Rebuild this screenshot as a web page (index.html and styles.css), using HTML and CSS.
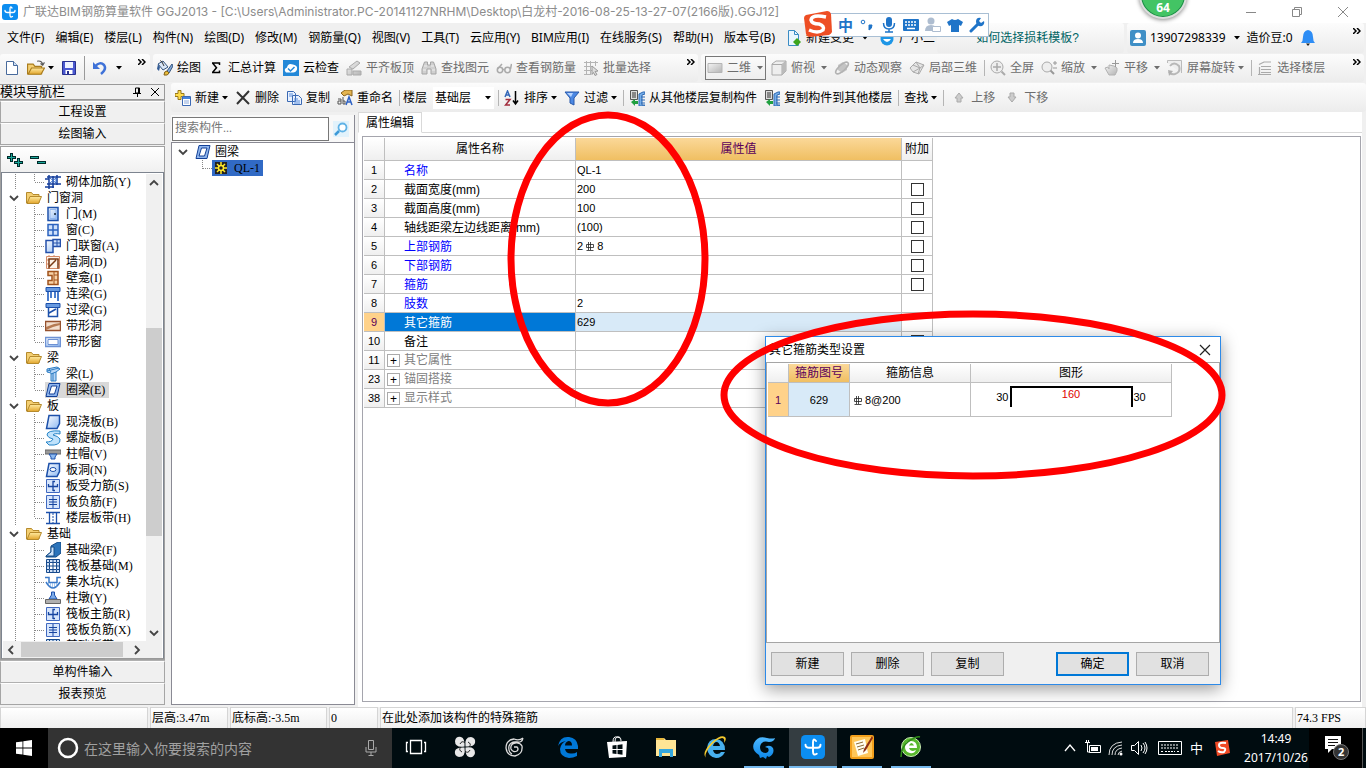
FILE: index.html
```html
<!DOCTYPE html>
<html lang="zh-CN">
<head>
<meta charset="utf-8">
<title>广联达BIM钢筋算量软件 GGJ2013</title>
<link rel="stylesheet" href="styles.css">
</head>
<body>
<svg class="defs" aria-hidden="true">
  <defs>
    <linearGradient id="gb" x1="0" y1="0" x2="1" y2="1"><stop offset="0" stop-color="#fff"/><stop offset="1" stop-color="#8db8f2"/></linearGradient>
    <linearGradient id="gf" x1="0" y1="0" x2="0" y2="1"><stop offset="0" stop-color="#ffeaa0"/><stop offset="1" stop-color="#e2a52c"/></linearGradient>
    <linearGradient id="gg" x1="0" y1="0" x2="1" y2="1"><stop offset="0" stop-color="#f4f4f4"/><stop offset="1" stop-color="#b4b4b4"/></linearGradient>
    <linearGradient id="gc" x1="0" y1="0" x2="0" y2="1"><stop offset="0" stop-color="#4db8ff"/><stop offset="1" stop-color="#0a86e8"/></linearGradient>
  </defs>
  <symbol id="caret" viewBox="0 0 6 4"><path d="M0 0h6L3 3.500z" fill="currentColor"/></symbol>
  <symbol id="more" viewBox="0 0 8 6"><path d="M0 0l3 3-3 3M4 0l3 3-3 3" fill="none" stroke="#000" stroke-width="1.500"/></symbol>
  <symbol id="app" viewBox="0 0 16 16"><rect width="16" height="16" rx="3" fill="#0c8df0"/><path d="M10 4Q8 1.500 8 5v6q0 3 2.500 1.500M3 6.500q0 2 2.500 2H11q2 0 2-2" fill="none" stroke="#fff" stroke-width="1.300" stroke-linecap="round"/></symbol>
  <symbol id="file" viewBox="0 0 16 16"><path d="M2.500 1.500h7l4 4v9h-11z" fill="#fff" stroke="#486a9c"/><path d="M9.500 1.500v4h4" fill="#cfe0f5" stroke="#486a9c"/></symbol>
  <symbol id="folder" viewBox="0 0 16 16"><path d="M.5 13V2.500h5l1.500 2h6V13z" fill="#f4cf72" stroke="#b58a2c"/><path d="M1 13.500L4 6.500h11.500l-3 7z" fill="url(#gf)" stroke="#b58a2c"/></symbol>
  <symbol id="open" viewBox="0 0 16 16"><path d="M.5 13V4.500h5l1.500 2h6V13z" fill="#f4cf72" stroke="#a97c1c"/><path d="M1 13.500L4 8h11.500l-3 5.500z" fill="url(#gf)" stroke="#a97c1c"/><path d="M9 2q4-1 5 3m-2-1l2 1.500L15.500 3" fill="none" stroke="#555"/></symbol>
  <symbol id="save" viewBox="0 0 16 16"><path d="M1.500 1.500h13v13h-13z" fill="#4a58d0" stroke="#28318f"/><path d="M4 2h8v6H4z" fill="#eef2ff"/><path d="M4.500 10h7v4h-7z" fill="#fff"/><path d="M6 11h2v3H6z" fill="#28318f"/></symbol>
  <symbol id="undo" viewBox="0 0 16 16"><path d="M3 6.500q5-5.500 9-1.500 3 4-3 9" fill="none" stroke="#3f72d8" stroke-width="2.500"/><path d="M1 2v7h7z" fill="#3f72d8"/></symbol>
  <symbol id="paint" viewBox="0 0 16 16"><path d="M1 4l5-3 5 6-5 3z" fill="#d9e6f5" stroke="#35557f"/><path d="M3 1q0-1 2 1l2 4" fill="none" stroke="#333"/><path d="M1 4l-1 5 2 2 1-4z" fill="#345d96"/><path d="M15 4l-5 7 2 2 4-7z" fill="#80a7d8" stroke="#35557f"/><path d="M10 11q-3 0-3 4 4 1 5-2z" fill="#e8bc3c" stroke="#82621b"/></symbol>
  <symbol id="sum" viewBox="0 0 16 16"><path d="M4 3h7.500v2M4.500 3l4 4.700-4 4.800M4 12.500h7.500v-2" fill="none" stroke="#000" stroke-width="1.500"/></symbol>
  <symbol id="cloud" viewBox="0 0 16 16"><rect width="16" height="16" fill="#2388d8"/><path d="M3 12.500q-3-3 1-5 1-5 6-3 5 1 4 5-1 3-4 3z" fill="#fff"/><path d="M5 8.500l2.500 2.500 4-4" fill="none" stroke="#2388d8" stroke-width="1.500"/></symbol>
  <symbol id="slab" viewBox="0 0 16 16"><path d="M3 7l8-6 3 2-7 6zM1 9h5v6H1zM7 11h8v4H7z" fill="url(#gg)" stroke="#aaa"/></symbol>
  <symbol id="bino" viewBox="0 0 16 16"><path d="M3.500 2h3v3h3V2h3l2.500 7v5H10V9H6v5H1V9z" fill="#d0d0d0" stroke="#a5a5a5"/><path d="M3 6h3M10 6h3M2 10h3M11 10h3" stroke="#eee"/></symbol>
  <symbol id="glass" viewBox="0 0 16 16"><g fill="none" stroke="#aaa" stroke-width="1.500"><circle cx="4" cy="10" r="2.700"/><circle cx="11.500" cy="10" r="2.700"/><path d="M6.500 9.500h2M1.500 9L6 4M14.500 9l1-5"/></g></symbol>
  <symbol id="batch" viewBox="0 0 16 16"><path d="M1 2.500h14M1 6.500h8M1 10.500h8M1 14.500h7M3.500 1v14M7.500 1v14M12.500 1v5" stroke="#b4b4b4"/><path d="M9 6l6 5-3 .5 2 3-2 1-1.500-3-1.500 2z" fill="#ddd" stroke="#999"/></symbol>
  <symbol id="rect" viewBox="0 0 16 16"><path d="M1 3.500h14v9H1z" fill="url(#gg)" stroke="#b5b5b5"/></symbol>
  <symbol id="cube" viewBox="0 0 16 16"><path d="M1 4l4-3h10v10l-4 4H1z" fill="#eee" stroke="#aaa"/><path d="M1 4.500h10V15M11 4.500L15 1" fill="none" stroke="#aaa"/><path d="M11 4.500L15 1v10l-4 4z" fill="#bbb"/></symbol>
  <symbol id="orbit" viewBox="0 0 16 16"><path d="M4 5l5-3 4 3v5l-5 3-4-3z" fill="#c4c4c4"/><ellipse cx="8" cy="8" rx="8" ry="3" transform="rotate(-42 8 8)" fill="none" stroke="#b2b2b2" stroke-width="1.500"/></symbol>
  <symbol id="part" viewBox="0 0 16 16"><path d="M1 8l6-6 8 3-5 9-6-2z" fill="#e6e6e6" stroke="#aaa"/><path d="M4 5l7 3M7 2l4 6-2 6M15 5l-4 3-7 4" fill="none" stroke="#aaa"/></symbol>
  <symbol id="full" viewBox="0 0 16 16"><circle cx="7" cy="7" r="6" fill="#eee" stroke="#aaa"/><path d="M7 3v8M3 7h8" stroke="#aaa" stroke-width="1.500"/><path d="M11.500 11.500L15 15" stroke="#aaa" stroke-width="2"/></symbol>
  <symbol id="zoom" viewBox="0 0 16 16"><circle cx="6" cy="7" r="5" fill="#eee" stroke="#aaa"/><path d="M9.500 10.500L13 14" stroke="#999" stroke-width="2"/><path d="M12 3h4M14 1v4M12 8h4" stroke="#999"/></symbol>
  <symbol id="hand" viewBox="0 0 16 16"><path d="M1 8l3-1 1 2V5l5 1 3 2v3l-2 4H5z" fill="url(#gg)" stroke="#b2b2b2"/><path d="M11.500 0v7M8 3.500h7" stroke="#999"/></symbol>
  <symbol id="rot" viewBox="0 0 16 16"><path d="M.5 3V.5h14V13" fill="#eee" stroke="#bbb"/><path d="M3 6q4-5 9 0 2 6-4 8-4 1-6-2" fill="none" stroke="#b8b8b8" stroke-width="2"/><path d="M1 10l5 1-4 5z" fill="#b0b0b0"/></symbol>
  <symbol id="floors" viewBox="0 0 16 16"><path d="M2 4.500L7 2h7M4 6.500h10M4 9.500h10M4 12.500h10M1 14.500h13M2.500 7v7" fill="none" stroke="#aaa" stroke-width="1.200"/></symbol>
  <symbol id="new" viewBox="0 0 16 16"><path d="M3 .5h3v3h3v3H6v3H3v-3H0v-3h3z" fill="#ffdc4c" stroke="#98791a"/><path d="M7.500 6.500h8v9h-8z" fill="#fff" stroke="#3b69b5"/><path d="M8 7h7v2H8z" fill="#4684dd"/><path d="M9 11h5M9 13h5" stroke="#89a8dc"/></symbol>
  <symbol id="del" viewBox="0 0 16 16"><path d="M2 2l12 12M14 1L2 14" stroke="#333" stroke-width="2"/></symbol>
  <symbol id="copy" viewBox="0 0 16 16"><path d="M1.500 1.500h6l2 2v8h-8zM6.500 5.500h6l3 3v6h-9z" fill="#eaf2ff" stroke="#3a69b3"/><path d="M3 4h4M3 6h3M8 9h4M8 11h6M8 13h6" stroke="#5b8edb"/></symbol>
  <symbol id="ren" viewBox="0 0 16 16"><path d="M4 3l4-3h7v6l-4-2-4 2z" fill="#e3b451" stroke="#89621c"/><path d="M9 15l3-8 3 8M10 12h4" fill="none" stroke="#2e62c4" stroke-width="1.500"/><path d="M1 9h3v5H1v-3h3M6 7v7h2v-3H6" fill="none" stroke="#555"/></symbol>
  <symbol id="sort" viewBox="0 0 16 16"><path d="M1 7l2.500-6L6 7M2 5h3" fill="none" stroke="#3367b8" stroke-width="1.500"/><path d="M1.500 9.500H6L1.500 15H6" fill="none" stroke="#a22d3d" stroke-width="1.500"/><path d="M11.500 1v12M9 10.500l2.500 3.500 2.500-3.500" fill="none" stroke="#000" stroke-width="1.500"/></symbol>
  <symbol id="filter" viewBox="0 0 16 16"><path d="M1 2h14l-5 6v7l-4-2V8z" fill="#4c88e3" stroke="#2859ab"/><path d="M3 3h6L7 7z" fill="#b8d5ff"/></symbol>
  <symbol id="fcopy" viewBox="0 0 16 16"><path d="M1.500.5h7v9h-7z" fill="#ddd" stroke="#555"/><path d="M3 3h4M3 5h4M3 7h4" stroke="#333"/><path d="M10 4l4-2h2v2l-3 1v10h3v1h-6zM12 7h4M12 10h4M12 13h4" fill="#76aee8" stroke="#2d68b3"/><path d="M2 12l4-3v2h3v3H6v2z" fill="#20a040"/></symbol>
  <symbol id="up" viewBox="0 0 16 16"><path d="M8 3l4 5h-2v4H6V8H4z" fill="#ccc" stroke="#aaa"/></symbol>
  <symbol id="down" viewBox="0 0 16 16"><path d="M8 12l4-5h-2V3H6v4H4z" fill="#ccc" stroke="#aaa"/></symbol>
  <symbol id="docplus" viewBox="0 0 16 16"><path d="M2.500.5h6l4 4v11h-10z" fill="#eaf6ff" stroke="#3a8cc4"/><path d="M8.500.5v4h4" fill="none" stroke="#3a8cc4"/><path d="M11 8l4 4-4 4-4-4z" fill="#3da51d"/></symbol>
  <symbol id="bear" viewBox="0 0 16 16"><circle cx="3" cy="5" r="2.500" fill="#1e96e6"/><circle cx="13" cy="5" r="2.500" fill="#1e96e6"/><circle cx="8" cy="9" r="6.500" fill="#1e96e6"/><path d="M4 9q4 6 8 0" fill="#fff"/></symbol>
  <symbol id="user" viewBox="0 0 16 16"><rect width="16" height="16" rx="2" fill="#3f8fc6"/><circle cx="8" cy="5.500" r="3" fill="#fff"/><path d="M3 13q0-4 5-4t5 4z" fill="#fff"/></symbol>
  <symbol id="bell" viewBox="0 0 16 16"><path d="M8 0q5 1 5 7 0 4 2 6H1q2-2 2-6 0-6 5-7z" fill="#2e8df5"/><path d="M6 13.500h4L8 16z" fill="#222"/></symbol>
  <symbol id="chev" viewBox="0 0 12 12"><path d="M2 4l4 4 4-4" fill="none" stroke="#444" stroke-width="1.800"/></symbol>
  <symbol id="ring" viewBox="0 0 16 16"><path d="M4 1.500h11L12 14.500H1z" fill="#8fb6ee" stroke="#123f96"/><path d="M6.500 4h5.500l-2.500 8H4z" fill="#fff" stroke="#123f96"/></symbol>
  <symbol id="sl" viewBox="0 0 16 16"><path d="M4 1.500h10.500v8L12 14.500H1.500z" fill="url(#gb)" stroke="#1c50aa" stroke-width="1.500"/></symbol>
  <symbol id="slh" viewBox="0 0 16 16"><path d="M4 1.500h10.500v8L12 14.500H1.500z" fill="url(#gb)" stroke="#1c50aa" stroke-width="1.500"/><ellipse cx="8" cy="7.500" rx="3" ry="2" fill="#fff" stroke="#1c50aa"/></symbol>
  <symbol id="wallrb" viewBox="0 0 16 16"><path d="M2 3h14M2 10h14M4 1v14M8 2v12M12 1v10M0 5h4M0 13h9" stroke="#153e9c" stroke-width="1.500"/><path d="M5 4l6 5V4L5 9" fill="none" stroke="#3a72d0"/></symbol>
  <symbol id="door" viewBox="0 0 16 16"><path d="M3 1.500h10v13H3z" fill="url(#gb)" stroke="#1c50aa" stroke-width="1.500"/><path d="M5 3.500h6v9H5z" fill="none" stroke="#8fb5ef"/><path d="M9 8h2" stroke="#123" stroke-width="1.500"/></symbol>
  <symbol id="win" viewBox="0 0 16 16"><path d="M3 2.500h10v11H3z" fill="#cfe1fb" stroke="#2c63bf" stroke-width="1.500"/><path d="M8 3v10M3 8h10" stroke="#2c63bf" stroke-width="1.500"/></symbol>
  <symbol id="dw" viewBox="0 0 16 16"><path d="M1 2.500h7v12H1zM8 1.500h7.500v7H8z" fill="url(#gb)" stroke="#2450aa" stroke-width="1.500"/><path d="M12 2v6M8 5h7" stroke="#2450aa"/></symbol>
  <symbol id="hole" viewBox="0 0 16 16"><path d="M1.500 2.500h13v12h-13z" fill="#fff3e8" stroke="#d58a66"/><path d="M1 6h3M1 10h3M13 6h2M13 10h2M4 1v2M9 1v2" stroke="#d58a66"/><path d="M4 14.500V5h9v9.500M4 13l7-7" fill="none" stroke="#7a3a14" stroke-width="1.500"/></symbol>
  <symbol id="niche" viewBox="0 0 16 16"><path d="M3 1.500h10v13H3v-4h4v-5H3z" fill="#f8d2a6" stroke="#a1531c" stroke-width="1.500"/><path d="M9 5h4M9 10h4M9 2v12" stroke="#a1531c"/></symbol>
  <symbol id="lb" viewBox="0 0 16 16"><path d="M1 1.500h14v4H1z" fill="#6799e0" stroke="#1c50aa"/><path d="M3 6v9M6 6v6M10 6v6M13 6v9" stroke="#4b7dcd" stroke-width="2"/></symbol>
  <symbol id="gl" viewBox="0 0 16 16"><path d="M1 1.500h14v4H1z" fill="#6799e0" stroke="#1c50aa"/><path d="M3.500 6v8.500h9V6M4 11l7-4" fill="none" stroke="#1c50aa" stroke-width="1.500"/></symbol>
  <symbol id="sh" viewBox="0 0 16 16"><path d="M.5 3.500h15v9H.5z" fill="#f3dfce" stroke="#96522e" stroke-width="1.500"/><path d="M1 9l8-3 6-1v2L8 9l-7 3z" fill="#b57a52"/></symbol>
  <symbol id="sw" viewBox="0 0 16 16"><path d="M.5 3.500h15v9H.5z" fill="url(#gb)" stroke="#6e92d4" stroke-width="1.500"/><path d="M3 5.500h10v5H3z" fill="#fff" stroke="#6e92d4"/></symbol>
  <symbol id="beam" viewBox="0 0 16 16"><path d="M2 3l10-2 3 2-4 3v9H6V7L2 6z" fill="#b7d6f7" stroke="#2d7cc2"/><path d="M2 5l12-3M6 8l5-2M8 7v8M4 3l2 3" stroke="#2d7cc2"/></symbol>
  <symbol id="spiral" viewBox="0 0 16 16"><path d="M15 1Q2 0 2 5q1 3 6 4-1 3-7 3l3 3q12 1 11-6-2-3-7-4 1-2 7-1z" fill="#bfe2fb" stroke="#2684c7"/></symbol>
  <symbol id="cap" viewBox="0 0 16 16"><path d="M0 4h16v4H0z" fill="#9a9a9a" stroke="#666"/><path d="M4 8h8l-2 3v2H6v-2z" fill="#8dbaf1" stroke="#1c50aa"/></symbol>
  <symbol id="rb1" viewBox="0 0 16 16"><path d="M1.500 1.500h13v13h-13z" fill="#d7e6fc" stroke="#4069c0"/><path d="M3.500 6v2.500h9V6M8 13V3.500h2M8 12.500h2" fill="none" stroke="#1645a0" stroke-width="1.300"/></symbol>
  <symbol id="rb2" viewBox="0 0 16 16"><path d="M1.500 1.500h13v13h-13z" fill="#d7e6fc" stroke="#4069c0"/><path d="M8 2v12M4 5.500h8M4 10.500h8M4 8h8" fill="none" stroke="#1645a0"/></symbol>
  <symbol id="strip" viewBox="0 0 16 16"><path d="M1 2.500h14M1 13.500h14M4.500 2v12M11.500 2v12" stroke="#1c50aa" stroke-width="1.300"/><path d="M8 3v10" stroke="#1c50aa" stroke-dasharray="2 1"/></symbol>
  <symbol id="fb" viewBox="0 0 16 16"><path d="M1 14l5-4V4l7-4h3v11l-5 4H1z" fill="#2c74ba" stroke="#134a85"/><path d="M1 14l5-4V5h3v9z" fill="#cfe4fa" stroke="#134a85"/></symbol>
  <symbol id="raft" viewBox="0 0 16 16"><path d="M1.500 1.500h13v13h-13z" fill="#cfe0f6" stroke="#174a8c"/><path d="M4.500 4.500h7v7h-7z" fill="#fff" stroke="#174a8c"/><path d="M8 1v14M1 8h14M4.500 1v3M11.500 1v3M4.500 12v3M11.500 12v3M1 4.500h3M1 11.500h3M12 4.500h3M12 11.500h3" fill="none" stroke="#174a8c"/></symbol>
  <symbol id="pit" viewBox="0 0 16 16"><path d="M0 3.500h4v5h8v-5h4M1 8q7 12 14 0" fill="none" stroke="#3a79c8" stroke-width="1.500"/><path d="M3 10h10M5 12h7" stroke="#5d98dd" stroke-dasharray="1 1"/></symbol>
  <symbol id="pier" viewBox="0 0 16 16"><path d="M6.500 2h3v3l2.500 4H4l2.500-4z" fill="#7cabe8" stroke="#1c50aa"/><path d="M.5 9.500h15v4H.5z" fill="#b0b0b0" stroke="#666"/></symbol>
  <symbol id="rebar" viewBox="0 0 10 10"><path d="M3.500 1v8M5.500 1v8M1.500 9.500h7M1.500 3.500h7v3h-7z" fill="none" stroke="#222" stroke-width=".8"/></symbol>
  <symbol id="gear" viewBox="0 0 12 12"><rect width="12" height="12" fill="#222"/><path d="M6 0v12M0 6h12M2 2l8 8M10 2l-8 8" stroke="#ffe92c" stroke-width="1.500"/><circle cx="6" cy="6" r="2.500" fill="#222" stroke="#ffe92c" stroke-width="1.500"/></symbol>
  <symbol id="mag" viewBox="0 0 16 16"><rect width="16" height="16" fill="#e2f2fb"/><circle cx="9.500" cy="6.500" r="4" fill="#fff" stroke="#5fb2e6" stroke-width="1.800"/><path d="M6 10l-4 4" stroke="#3d9ad8" stroke-width="2.500"/></symbol>
</svg>

<div class="app">
  <header class="titlebar">
    <svg class="i16"><use href="#app"/></svg>
    <h1 class="title">广联达BIM钢筋算量软件 GGJ2013 - [C:\Users\Administrator.PC-20141127NRHM\Desktop\白龙村-2016-08-25-13-27-07(2166版).GGJ12]</h1>
    <div class="winbtns">
      <button aria-label="最小化"><svg viewBox="0 0 12 12"><path d="M1 6.500h10" stroke="#888"/></svg></button>
      <button aria-label="还原"><svg viewBox="0 0 12 12"><path d="M1.500 3.500h7v7h-7zM3.500 3V1.500h7v7H9" fill="none" stroke="#888"/></svg></button>
      <button aria-label="关闭"><svg viewBox="0 0 12 12"><path d="M1 1l10 10M11 1L1 11" stroke="#888"/></svg></button>
    </div>
  </header>

  <div class="menurow">
    <nav class="menu">
      <button>文件(F)</button><button>编辑(E)</button><button>楼层(L)</button><button>构件(N)</button><button>绘图(D)</button><button>修改(M)</button><button>钢筋量(Q)</button><button>视图(V)</button><button>工具(T)</button><button>云应用(Y)</button><button>BIM应用(I)</button><button>在线服务(S)</button><button>帮助(H)</button><button>版本号(B)</button>
      <button class="tb"><svg class="i16"><use href="#docplus"/></svg>新建变更<svg class="caret wide"><use href="#caret"/></svg></button>
      <button class="tb"><svg class="i16"><use href="#bear"/></svg>广小二</button>
    </nav>
    <div class="band tip"><a href="#">如何选择损耗模板?</a></div>
    <div class="band account">
      <button class="tb"><svg class="i16"><use href="#user"/></svg>13907298339<svg class="caret wide"><use href="#caret"/></svg></button>
      <span>造价豆:0</span>
      <button class="tb" aria-label="消息"><svg class="i16"><use href="#bell"/></svg></button>
      <svg class="more"><use href="#more"/></svg>
    </div>
  </div>

  <div class="toolrow">
    <div class="band files">
      <button class="tb" aria-label="新建工程"><svg class="i16"><use href="#file"/></svg></button>
      <button class="tb" aria-label="打开"><svg class="i18"><use href="#open"/></svg><svg class="caret"><use href="#caret"/></svg></button>
      <button class="tb" aria-label="保存"><svg class="i16"><use href="#save"/></svg></button>
      <i class="sep tall"></i>
      <button class="tb" aria-label="撤销"><svg class="i16"><use href="#undo"/></svg><svg class="caret wide"><use href="#caret"/></svg></button>
      <svg class="more"><use href="#more"/></svg>
    </div>
    <div class="band tools">
      <button class="tb"><svg class="i16"><use href="#paint"/></svg>绘图</button>
      <button class="tb"><svg class="i16"><use href="#sum"/></svg>汇总计算</button>
      <button class="tb"><svg class="i16"><use href="#cloud"/></svg>云检查</button>
      <button class="tb off"><svg class="i16"><use href="#slab"/></svg>平齐板顶</button>
      <button class="tb off"><svg class="i16"><use href="#bino"/></svg>查找图元</button>
      <button class="tb off"><svg class="i16"><use href="#glass"/></svg>查看钢筋量</button>
      <button class="tb off"><svg class="i16"><use href="#batch"/></svg>批量选择</button>
      <svg class="more"><use href="#more"/></svg>
    </div>
    <div class="band views">
      <button class="tb off boxed"><svg class="i16"><use href="#rect"/></svg>二维<svg class="caret far"><use href="#caret"/></svg></button>
      <button class="tb off"><svg class="i16"><use href="#cube"/></svg>俯视<svg class="caret far"><use href="#caret"/></svg></button>
      <button class="tb off"><svg class="i16"><use href="#orbit"/></svg>动态观察</button>
      <button class="tb off"><svg class="i16"><use href="#part"/></svg>局部三维</button>
      <i class="sep"></i>
      <button class="tb off"><svg class="i16"><use href="#full"/></svg>全屏</button>
      <button class="tb off"><svg class="i16"><use href="#zoom"/></svg>缩放<svg class="caret far"><use href="#caret"/></svg></button>
      <button class="tb off"><svg class="i16"><use href="#hand"/></svg>平移<svg class="caret far"><use href="#caret"/></svg></button>
      <button class="tb off"><svg class="i16"><use href="#rot"/></svg>屏幕旋转<svg class="caret"><use href="#caret"/></svg></button>
      <i class="sep"></i>
      <button class="tb off"><svg class="i16"><use href="#floors"/></svg>选择楼层</button>
      <svg class="more"><use href="#more"/></svg>
    </div>
  </div>

  <div class="main">
    <aside class="nav">
      <div class="navtitle"><span>模块导航栏</span>
        <svg viewBox="0 0 10 10"><path d="M3.500 1h4v5h-4zM1 6.500h8M5.500 7v3M6.500 1v5" fill="none" stroke="#000"/></svg>
        <svg viewBox="0 0 10 10"><path d="M1 1l8 8M9 1L1 9" stroke="#000"/></svg>
      </div>
      <button class="navbtn">工程设置</button>
      <button class="navbtn">绘图输入</button>
      <div class="navpane">
        <div class="expand">
          <svg class="pm" viewBox="0 0 40 14"><g fill="#002a2a"><path d="M3 0h3v3h3v3H6v3H3V6H0V3h3z"/><path d="M10 5h3v3h3v3h-3v3h-3v-3H7V8h3z"/><path d="M23 3h9v3h-9zM30 8h9v3h-9z"/></g><path d="M4.500 1v7M1 4.500h7M11.500 6v7M8 9.500h7M24 4.500h7M31 9.500h7" stroke="#19a89a"/></svg>
        </div>
        <div class="treebox">
          <ul class="tree">
            <li class="leaf last"><svg class="i16"><use href="#wallrb"/></svg><span>砌体加筋(Y)</span></li>
            <li class="fold"><svg class="chev"><use href="#chev"/></svg><svg class="i16"><use href="#folder"/></svg><span>门窗洞</span></li>
            <li class="leaf"><svg class="i16"><use href="#door"/></svg><span>门(M)</span></li>
            <li class="leaf"><svg class="i16"><use href="#win"/></svg><span>窗(C)</span></li>
            <li class="leaf"><svg class="i16"><use href="#dw"/></svg><span>门联窗(A)</span></li>
            <li class="leaf"><svg class="i16"><use href="#hole"/></svg><span>墙洞(D)</span></li>
            <li class="leaf"><svg class="i16"><use href="#niche"/></svg><span>壁龛(I)</span></li>
            <li class="leaf"><svg class="i16"><use href="#lb"/></svg><span>连梁(G)</span></li>
            <li class="leaf"><svg class="i16"><use href="#gl"/></svg><span>过梁(G)</span></li>
            <li class="leaf"><svg class="i16"><use href="#sh"/></svg><span>带形洞</span></li>
            <li class="leaf last"><svg class="i16"><use href="#sw"/></svg><span>带形窗</span></li>
            <li class="fold"><svg class="chev"><use href="#chev"/></svg><svg class="i16"><use href="#folder"/></svg><span>梁</span></li>
            <li class="leaf"><svg class="i16"><use href="#beam"/></svg><span>梁(L)</span></li>
            <li class="leaf last current"><svg class="i16"><use href="#ring"/></svg><span>圈梁(E)</span></li>
            <li class="fold"><svg class="chev"><use href="#chev"/></svg><svg class="i16"><use href="#folder"/></svg><span>板</span></li>
            <li class="leaf"><svg class="i16"><use href="#sl"/></svg><span>现浇板(B)</span></li>
            <li class="leaf"><svg class="i16"><use href="#spiral"/></svg><span>螺旋板(B)</span></li>
            <li class="leaf"><svg class="i16"><use href="#cap"/></svg><span>柱帽(V)</span></li>
            <li class="leaf"><svg class="i16"><use href="#slh"/></svg><span>板洞(N)</span></li>
            <li class="leaf"><svg class="i16"><use href="#rb1"/></svg><span>板受力筋(S)</span></li>
            <li class="leaf"><svg class="i16"><use href="#rb2"/></svg><span>板负筋(F)</span></li>
            <li class="leaf last"><svg class="i16"><use href="#strip"/></svg><span>楼层板带(H)</span></li>
            <li class="fold"><svg class="chev"><use href="#chev"/></svg><svg class="i16"><use href="#folder"/></svg><span>基础</span></li>
            <li class="leaf"><svg class="i16"><use href="#fb"/></svg><span>基础梁(F)</span></li>
            <li class="leaf"><svg class="i16"><use href="#raft"/></svg><span>筏板基础(M)</span></li>
            <li class="leaf"><svg class="i16"><use href="#pit"/></svg><span>集水坑(K)</span></li>
            <li class="leaf"><svg class="i16"><use href="#pier"/></svg><span>柱墩(Y)</span></li>
            <li class="leaf"><svg class="i16"><use href="#rb1"/></svg><span>筏板主筋(R)</span></li>
            <li class="leaf"><svg class="i16"><use href="#rb2"/></svg><span>筏板负筋(X)</span></li>
            <li class="leaf"><svg class="i16"><use href="#raft"/></svg><span>基础板带(W)</span></li>
          </ul>
          <div class="vbar"><svg class="chev flip"><use href="#chev"/></svg><i class="vthumb"></i><svg class="chev"><use href="#chev"/></svg></div>
          <div class="hbar"><svg class="chev left"><use href="#chev"/></svg><i class="hthumb"></i><svg class="chev right"><use href="#chev"/></svg></div>
        </div>
      </div>
      <button class="navbtn">单构件输入</button>
      <button class="navbtn">报表预览</button>
    </aside>

    <div class="work">
      <div class="band comp">
        <button class="tb"><svg class="i16"><use href="#new"/></svg>新建<svg class="caret"><use href="#caret"/></svg></button>
        <button class="tb"><svg class="i16"><use href="#del"/></svg>删除</button>
        <button class="tb"><svg class="i16"><use href="#copy"/></svg>复制</button>
        <button class="tb"><svg class="i16"><use href="#ren"/></svg>重命名</button>
        <i class="sep"></i>
        <label class="floor">楼层
          <span class="pick"><select><option>基础层</option></select><svg class="caret"><use href="#caret"/></svg></span>
        </label>
        <i class="sep"></i>
        <button class="tb"><svg class="i16"><use href="#sort"/></svg>排序<svg class="caret"><use href="#caret"/></svg></button>
        <button class="tb"><svg class="i16"><use href="#filter"/></svg>过滤<svg class="caret"><use href="#caret"/></svg></button>
        <i class="sep"></i>
        <button class="tb"><svg class="i16"><use href="#fcopy"/></svg>从其他楼层复制构件</button>
        <button class="tb"><svg class="i16"><use href="#fcopy"/></svg>复制构件到其他楼层</button>
        <i class="sep"></i>
        <button class="tb">查找<svg class="caret"><use href="#caret"/></svg></button>
        <i class="sep"></i>
        <button class="tb off"><svg class="i16"><use href="#up"/></svg>上移</button>
        <button class="tb off"><svg class="i16"><use href="#down"/></svg>下移</button>
      </div>

      <div class="panes">
        <section class="list">
          <div class="search">
            <input type="text" placeholder="搜索构件..." aria-label="搜索构件">
            <button aria-label="搜索"><svg class="i16"><use href="#mag"/></svg></button>
          </div>
          <ul class="members">
            <li class="root"><svg class="chev"><use href="#chev"/></svg><svg class="i16"><use href="#ring"/></svg><span>圈梁</span></li>
            <li class="child"><span class="picked"><svg class="gear"><use href="#gear"/></svg>QL-1</span></li>
          </ul>
        </section>

        <section class="editor">
          <div class="tabs"><button class="tab">属性编辑</button></div>
          <div class="sheet">
            <table class="props">
              <colgroup><col class="c-no"><col class="c-name"><col class="c-val"><col class="c-add"></colgroup>
              <thead><tr><th></th><th>属性名称</th><th class="hot">属性值</th><th>附加</th></tr></thead>
              <tbody>
                <tr><th>1</th><td class="name key">名称</td><td>QL-1</td><td></td></tr>
                <tr><th>2</th><td class="name">截面宽度(mm)</td><td>200</td><td class="add"><input type="checkbox" aria-label="附加 截面宽度"></td></tr>
                <tr><th>3</th><td class="name">截面高度(mm)</td><td>100</td><td class="add"><input type="checkbox" aria-label="附加 截面高度"></td></tr>
                <tr><th>4</th><td class="name">轴线距梁左边线距离(mm)</td><td>(100)</td><td class="add"><input type="checkbox" aria-label="附加 轴线距离"></td></tr>
                <tr><th>5</th><td class="name key">上部钢筋</td><td>2<svg class="rebar"><use href="#rebar"/></svg>8</td><td class="add"><input type="checkbox" aria-label="附加 上部钢筋"></td></tr>
                <tr><th>6</th><td class="name key">下部钢筋</td><td></td><td class="add"><input type="checkbox" aria-label="附加 下部钢筋"></td></tr>
                <tr><th>7</th><td class="name key">箍筋</td><td></td><td class="add"><input type="checkbox" aria-label="附加 箍筋"></td></tr>
                <tr><th>8</th><td class="name key">肢数</td><td>2</td><td></td></tr>
                <tr class="sel"><th>9</th><td class="name">其它箍筋</td><td class="cur">629</td><td></td></tr>
                <tr><th>10</th><td class="name">备注</td><td></td><td class="add"><input type="checkbox" aria-label="附加 备注"></td></tr>
                <tr><th>11</th><td class="group"><button aria-label="展开">+</button>其它属性</td><td></td><td></td></tr>
                <tr><th>23</th><td class="group"><button aria-label="展开">+</button>锚固搭接</td><td></td><td></td></tr>
                <tr><th>38</th><td class="group"><button aria-label="展开">+</button>显示样式</td><td></td><td></td></tr>
              </tbody>
            </table>
          </div>
        </section>
      </div>
    </div>
  </div>

  <footer class="status">
    <span class="s1"></span><span class="s2">层高:3.47m</span><span class="s3">底标高:-3.5m</span><span class="s4">0</span><span class="s5">在此处添加该构件的特殊箍筋</span><span class="s6">74.3 FPS</span>
  </footer>

  <div class="taskbar">
    <button class="start" aria-label="开始"><svg viewBox="0 0 16 16"><path d="M0 2.300L6.500 1.400V7.600H0zM7.300 1.300L16 0v7.600H7.300zM0 8.400h6.500v6.200L0 13.700zM7.300 8.400H16V16l-8.700-1.200z" fill="#fff"/></svg></button>
    <label class="cortana">
      <svg class="ringo" viewBox="0 0 22 22"><circle cx="11" cy="11" r="9" fill="none" stroke="#fff" stroke-width="2.500"/></svg>
      <input type="text" placeholder="在这里输入你要搜索的内容" aria-label="搜索">
      <svg class="mic" viewBox="0 0 12 18"><path d="M3.500 1.500h5v9h-5zM1 8v5h10V8M6 13v4M3.500 16.500h5" fill="none" stroke="#aaa"/></svg>
    </label>
    <div class="apps">
      <button aria-label="任务视图"><svg viewBox="0 0 24 24"><path d="M6.500 5.500h11v13h-11zM4 7.500H2.500v9H4M20 7.500h1.500v9H20" fill="none" stroke="#fff" stroke-width="1.300"/></svg></button>
      <button aria-label="四叶"><svg viewBox="0 0 24 24"><g fill="#e8e8e8"><path d="M11.500 11.500Q2 13 2 6q1-5 6-4 4 1 3.500 9.500z"/><path d="M12.500 11.500Q11 2 18 2q5 1 4 6-1 4-9.500 3.500z"/><path d="M12.500 12.500Q22 11 22 18q-1 5-6 4-4-1-3.500-9.500z"/><path d="M11.500 12.500Q13 22 6 22q-5-1-4-6 1-4 9.500-3.500z"/></g><path d="M12 8q-3-3-5 1M16 12q3-3-1-5M12 16q3 3 5-1M8 12q-3 3 1 5" fill="none" stroke="#222"/></svg></button>
      <button aria-label="旋风"><svg viewBox="0 0 24 24"><path d="M21 3q-4 3-9 1-8 1-8 9 1 8 9 8 8-2 7-10-2-4-7-3-5 1-4 6 2 4 6 2 2-2 0-4h-3M21 3q-1 5-6 4-6-1-8 4-1 6 3 8" fill="none" stroke="#ddd" stroke-width="1.300"/></svg></button>
      <button class="gapped" aria-label="Edge"><svg viewBox="0 0 24 24"><path d="M2 11Q4 1 13 2q8 1 9 9v3H9q1 5 7 4.500 3 0 5-1.500v4q-4 2-8 2-9-1-9-9 1-6 6-8-6 1-8 5zM9 10.500h7Q16 6 12.500 6 9 7 9 10.500z" fill="#0078d7"/></svg></button>
      <button aria-label="应用商店"><svg viewBox="0 0 24 24"><path d="M2 7l20-1-1 16-17 1z" fill="#fff"/><path d="M8 7q0-6 4-5 4-1 4 4M10 7q0-7 5-4" fill="none" stroke="#fff"/><path d="M7.500 10.500l4-.5v4h-4zM12.500 10l5-.7V14h-5zM7.500 15h4v4l-4-.5zM12.500 15h5v4.700l-5-.6z" fill="#000c10"/></svg></button>
      <button aria-label="文件资源管理器"><svg viewBox="0 0 24 24"><path d="M2 3h8l2 2h10v16H2z" fill="#ffe595"/><path d="M2 3h8v2H2z" fill="#e6b73d"/><path d="M5 22v-8h14v8h-3v-4H8v4z" fill="#36a7dc"/></svg></button>
      <button aria-label="Internet Explorer"><svg viewBox="0 0 24 24"><path d="M4 13Q5 4 13 4q9 1 9 11H10q1 4 4 4 3 0 4-2h4q-3 6-9 6-8-1-9-10zm6-2h7q-1-4-3.500-4T10 11z" fill="#48b0ee"/><path d="M3 23Q-2 18 9 7q9-8 13-5 2 2-1 6 1-5-2-5Q13 4 6 13q-5 7-3 10z" fill="#f5ca2e"/></svg></button>
      <button class="run" aria-label="广联达"><svg viewBox="0 0 24 24"><path d="M23 3q-1 4-6 4-8-2-9 5 0 6 6 6 4-1 2-5l-3-1q5-3 8 1 2 6-4 9l-2-1-1 3-3-2-3 1-1-3q-8-5-5-12Q6 0 15 3q5 1 8 0z" fill="url(#gc)"/></svg></button>
      <button class="run active" aria-label="GGJ2013"><svg viewBox="0 0 16 16"><use href="#app"/></svg></button>
      <button class="run" aria-label="便笺"><svg viewBox="0 0 24 24"><rect width="24" height="24" rx="2" fill="#f3a01c"/><rect x="2" y="2" width="20" height="20" fill="#ffc759"/><path d="M4 7l11-3 3 14-10 3z" fill="#fffdf0"/><path d="M6 9l7-2M7 12l7-2M8 15l6-2" stroke="#8d6a35"/><path d="M22 1l-8 13-1 4 3-3 7-12z" fill="#8d2e14"/></svg></button>
      <button class="run" aria-label="浏览器"><svg viewBox="0 0 24 24"><circle cx="12" cy="12" r="9.500" fill="#58b82d" stroke="#c9edb4"/><path d="M6 12q0-6 6-6t6 7H10q1 3 4 3l3-1q-2 4-6 3-5-1-5-6zm4-1.500h5Q14 8 12.500 8T10 10.500z" fill="#fff"/><path d="M2 22Q2 12 10 6q8-5 11-4" fill="none" stroke="#2d8a18" stroke-width="1.500"/></svg></button>
    </div>
    <div class="tray">
      <svg class="i18" viewBox="0 0 18 18"><path d="M4 12l5-6 5 6" fill="none" stroke="#fff" stroke-width="1.300"/></svg>
      <svg class="i18" viewBox="0 0 18 18"><path d="M5.500 6.500h11v7h-11zM1 3.500h5M2.500 1v3M4.500 1v3M3.500 4v9H6" fill="none" stroke="#fff"/><path d="M7 8h7v4H7z" fill="#fff"/></svg>
      <svg class="i18" viewBox="0 0 18 18"><g fill="none" stroke="#ddd"><path d="M2 16Q2 4 15 3"/><path d="M5 16q0-9 10-10"/><path d="M8 16q0-6 7-7"/><path d="M11 16q0-3 4-4"/></g><circle cx="14" cy="15" r="1.500" fill="#fff"/></svg>
      <svg class="i18" viewBox="0 0 18 18"><path d="M1.500 6.500h3l4-4v13l-4-4h-3zM11 6q2 3 0 6M13 4q4 5 0 10M15 3q4 6 0 12" fill="none" stroke="#fff"/></svg>
      <svg class="kb" viewBox="0 0 24 14"><path d="M.5.5h23v13H.5z" fill="none" stroke="#fff"/><path d="M3 4h18M3 7h18M3 10.500h2M7 10.500h10M19 10.500h2" stroke="#fff" stroke-dasharray="2 1"/></svg>
      <span class="ime">中</span>
      <svg class="i18" viewBox="0 0 18 18"><path d="M2 3l13-2 2 13-13 3z" fill="#f04a25"/><path d="M13 4q-7-1-7 2t4 3 1 4q-3 1-6-1" fill="none" stroke="#fff" stroke-width="2"/></svg>
    </div>
    <time class="clock"><span>14:49</span><span>2017/10/26</span></time>
    <button class="notes" aria-label="2 条通知"><svg viewBox="0 0 26 26"><path d="M2 1h16v13H9l-4 4v-4H2z" fill="#fff"/><path d="M5 4.500h10M5 7.500h10M5 10.500h7" stroke="#111"/><circle cx="18" cy="17" r="7.500" fill="#333" stroke="#777"/></svg><b>2</b></button>
  </div>
</div>

<div class="ime-bar">
  <svg class="sogou" viewBox="0 0 28 28"><path d="M2 5l21-4q3 0 4 3l1 18q-1 2-3 3L5 27q-2 0-3-3L0 8q0-2 2-3z" fill="#ee4e24"/><path d="M22 7Q8 4 7 10q1 4 8 4 6 2 4 6-5 4-14 0" fill="none" stroke="#fff" stroke-width="3.500"/></svg>
  <b>中</b>
  <svg class="i16" viewBox="0 0 16 16"><circle cx="4" cy="5" r="1.800" fill="none" stroke="#1f74c8"/><path d="M10 8h3q0 4-3 5z" fill="#1f74c8" stroke="#1f74c8"/></svg>
  <svg class="i16" viewBox="0 0 16 16"><rect x="5" y="0" width="6" height="10" rx="3" fill="#1f74c8"/><path d="M2.500 6q0 6 5.500 6t5.500-6M8 12v3M4 15h8" fill="none" stroke="#1f74c8" stroke-width="1.500"/></svg>
  <svg class="i16" viewBox="0 0 16 16"><rect x="0" y="2" width="16" height="12" rx="1" fill="#1f74c8"/><path d="M2 5h12M2 8h12" stroke="#fff" stroke-width="1.500" stroke-dasharray="2 1"/><path d="M4 11.500h8" stroke="#fff" stroke-width="1.500"/></svg>
  <svg class="i16" viewBox="0 0 16 16"><circle cx="6" cy="4" r="3.500" fill="#aebdd0"/><path d="M0 14q0-6 6-6t6 6z" fill="#aebdd0"/><path d="M7.500 9.500h8v5h-8z" fill="#fff" stroke="#aebdd0"/></svg>
  <svg class="i16" viewBox="0 0 16 16"><path d="M5 2q3 2 6 0l5 3-2 4-2-1v7H4V8L2 9 0 5z" fill="#1f74c8"/></svg>
  <svg class="i16" viewBox="0 0 16 16"><path d="M2 14l7-7" stroke="#1f74c8" stroke-width="3" stroke-linecap="round"/><path d="M15 4l-3 2-2-2 2-3Q7 0 7 5q1 5 6 4 3-2 2-5z" fill="#1f74c8"/></svg>
</div>

<div class="ball"><span>64</span></div>

<div class="dialog" role="dialog" aria-labelledby="dlg-title">
  <div class="dlg-head"><h2 id="dlg-title">其它箍筋类型设置</h2><button aria-label="关闭"><svg viewBox="0 0 12 12"><path d="M1 1l10 10M11 1L1 11" stroke="#222" stroke-width="1.200"/></svg></button></div>
  <div class="dlg-body">
    <table class="hoops">
      <colgroup><col class="h-no"><col class="h-id"><col class="h-info"><col class="h-fig"></colgroup>
      <thead><tr><th></th><th class="hot">箍筋图号</th><th>箍筋信息</th><th>图形</th></tr></thead>
      <tbody><tr><th>1</th><td class="id">629</td><td class="info"><svg class="rebar"><use href="#rebar"/></svg>8@200</td>
        <td class="fig"><div class="shape"><span>30</span><span class="bar">160</span><span>30</span></div></td></tr></tbody>
    </table>
  </div>
  <div class="dlg-foot">
    <button>新建</button><button>删除</button><button>复制</button>
    <button class="ok">确定</button><button>取消</button>
  </div>
</div>

<svg class="marks" viewBox="0 0 1366 768" aria-hidden="true">
  <ellipse cx="608" cy="259" rx="97" ry="144"/>
  <ellipse cx="973" cy="395" rx="249" ry="81"/>
</svg>
</body>
</html>
```

FILE: styles.css
```css
* { box-sizing: border-box; }

body {
  margin: 0;
  height: 100vh;
  overflow: hidden;
  position: relative;
  background: #f0f0f0;
  color: #000;
  font: 12px/16px "Noto Sans", "Noto Sans CJK SC", sans-serif;
}

button, input, select {
  font: inherit;
  color: inherit;
  margin: 0;
  padding: 0;
  border: 0;
  background: none;
}

ul { list-style: none; margin: 0; padding: 0; }
h1, h2 { margin: 0; font: inherit; }
svg { flex: none; display: block; }

.defs { position: absolute; width: 0; height: 0; }
.i16 { width: 16px; height: 16px; }
.i18 { width: 18px; height: 18px; }
.more { width: 8px; height: 6px; align-self: flex-start; margin: 5px 3px 0 auto; }
.caret { width: 6px; height: 4px; margin-left: -1px; }
.caret.far { margin-left: 2px; }
.caret.wide { margin-left: 4px; }

.app { height: 100%; display: flex; flex-direction: column; }

/* title bar */
.titlebar {
  height: 23px;
  flex: none;
  display: flex;
  align-items: center;
  gap: 5px;
  padding-left: 2px;
  background: #fff;
}
.title { flex: 1; color: #8c8c8c; white-space: nowrap; font-family: Inter, "Noto Sans CJK SC", sans-serif; }
.winbtns { display: flex; }
.winbtns button { width: 46px; display: flex; justify-content: center; }
.winbtns svg { width: 12px; height: 12px; }

/* bars */
.menurow, .toolrow { display: flex; gap: 3px; flex: none; padding-right: 2px; white-space: nowrap; }
.menurow { height: 30px; }
.toolrow { height: 30px; padding-top: 1px; padding-bottom: 1px; }
.menu { display: flex; align-items: center; gap: 11px; padding-left: 7px; width: 934px; }
.band {
  display: flex;
  align-items: center;
  gap: 7px;
  border-radius: 3px;
  background: linear-gradient(#fcfcfc, #ececec);
}
.tb { display: flex; align-items: center; gap: 4px; white-space: nowrap; }
.tb.off { color: #6d6d6d; }
.sep { width: 1px; height: 16px; background: #b5b5b5; margin-right: -2px; flex: none; }
.sep.tall { height: 24px; background: #999; margin-right: 0; }

.tip { width: 187px; justify-content: center; padding-right: 6px; }
.tip a { color: #006464; text-decoration: none; font-family: "Liberation Sans", "Noto Sans CJK SC", sans-serif; }
.account { flex: 1; padding-left: 3px; }

.files { width: 150px; padding-left: 4px; }
.files .more { margin-right: 4px; }
.tools { width: 545px; padding-left: 4px; }
.views { flex: 1; padding-left: 4px; }
.tb.boxed { height: 24px; padding: 0 2px 0 1px; border: 1px solid #777; margin-right: -2px; }

/* main area */
.main { flex: 1; min-height: 0; display: flex; gap: 6px; }
.nav {
  width: 165px;
  flex: none;
  display: flex;
  flex-direction: column;
  padding: 1px 0 2px;
  font-family: "Liberation Serif", "Noto Sans CJK SC", sans-serif;
}
.navtitle {
  height: 16px;
  margin-bottom: 1px;
  display: flex;
  align-items: center;
  gap: 8px;
  padding-right: 4px;
  border: 1px solid #999;
  border-left: 0;
  font-size: 13px;
  line-height: 14px;
}
.navtitle span { flex: 1; }
.navtitle svg { width: 10px; height: 10px; }
.navbtn {
  height: 22px;
  flex: none;
  border: 1px solid #a5a5a5;
  border-top-color: #fff;
  box-shadow: 0 -1px #b0b0b0;
}
.navpane {
  flex: 1;
  min-height: 0;
  display: flex;
  flex-direction: column;
  margin: 1px 0;
  border: 1px solid #a0a0a0;
  background: #f0f0f0;
}
.expand { height: 25px; padding: 6px 0 0 6px; background: linear-gradient(#fff, #f0f0f0); flex: none; }
.pm { width: 40px; height: 14px; }
.treebox {
  flex: 1;
  min-height: 0;
  display: grid;
  grid-template-columns: 1fr 16px;
  grid-template-rows: 1fr 17px;
  border: 1px solid #7d848f;
  border-bottom-color: #999;
  padding: 1px 1px 0 1px;
  background: #fff;
}
.tree { overflow: hidden; }
.tree li { height: 16px; display: flex; align-items: center; white-space: nowrap; }
.tree .leaf {
  gap: 1px;
  background:
    repeating-linear-gradient(#888 0 1px, transparent 1px 2px) 12px 0 / 1px 100% no-repeat,
    repeating-linear-gradient(#888 0 1px, transparent 1px 2px) 31px 0 / 1px 100% no-repeat;
}
.tree .leaf.last { background-size: 1px 100%, 1px 8px; }
.tree .leaf::before {
  content: "";
  width: 9px;
  height: 1px;
  margin-left: 32px;
  background: repeating-linear-gradient(90deg, #888 0 1px, transparent 1px 2px);
}
.tree .leaf span { padding: 0 4px; }
.tree .current span, .tree .current svg { background: #d9d9d9; }
.tree .current { gap: 0; }
.tree .current span { padding-left: 5px; }
.tree .current svg { margin-left: 1px; }
.tree .fold { padding-left: 5px; gap: 5px; }
.tree .fold .chev { margin-right: 1px; }
.chev { width: 12px; height: 12px; }
.chev.flip { transform: rotate(180deg); }
.chev.left { transform: rotate(90deg); }
.chev.right { transform: rotate(-90deg); }
.vbar { display: flex; flex-direction: column; align-items: center; padding: 3px 0 2px; background: #f0f0f0; }
.vthumb { width: 100%; height: 45%; margin: 139px 0 auto; background: #cdcdcd; }
.hbar { grid-column: 1 / 3; display: flex; align-items: center; gap: 4px; padding-left: 2px; background: #f0f0f0; }
.hthumb { width: 102px; height: 15px; background: #cdcdcd; }
.hbar .right { margin-left: 4px; }

.work { flex: 1; min-width: 0; display: flex; flex-direction: column; }
.comp { height: 29px; flex: none; padding-left: 4px; }
.comp .floor { display: flex; align-items: center; gap: 6px; margin-left: -2px; }
.comp .sep { margin-left: -1px; }
.comp .off { margin-left: 2px; }
.pick { display: flex; align-items: center; width: 61px; padding-left: 2px; background: #fff; height: 22px; }
.pick select { appearance: none; flex: 1; width: 40px; }
.pick .caret { margin-right: 3px; }
.comp .floor + .sep { margin-left: -3px; }

.panes { flex: 1; min-height: 0; display: flex; gap: 3px; padding-right: 4px; }
.list {
  width: 184px;
  flex: none;
  display: flex;
  flex-direction: column;
  margin: 3px 0 2px;
  border-right: 1px solid #8a8a94;
  font-family: "Liberation Serif", "Noto Sans CJK SC", sans-serif;
}
.search { height: 27px; flex: none; display: flex; gap: 4px; padding: 2px 0 1px 1px; background: #f8f8f8; }
.search input { width: 157px; padding: 0 2px 2px; border: 1px solid #777; background: #fff; }
.search input::placeholder { color: #777; opacity: 1; }
.search button { display: flex; align-items: center; }
.members { flex: 1; padding: 1px 0 0 5px; border: 1px solid #8a8a94; border-right: 0; background: #fff; }
.members li { height: 16px; display: flex; align-items: center; }
.root { gap: 4px; }
.root .i16 { margin-left: 2px; }
.child::before {
  content: "";
  width: 9px;
  height: 8px;
  margin: -8px 0 0 25px;
  border: 1px dotted #888;
  border-width: 0 0 1px 1px;
}
.picked { display: flex; align-items: center; gap: 7px; width: 51px; height: 16px; padding-left: 3px; background: #316ac5; white-space: nowrap; }
.gear { width: 12px; height: 12px; }

.editor { flex: 1; min-width: 0; display: flex; flex-direction: column; padding-bottom: 2px; background: #fff; font-family: "Liberation Sans", "Noto Sans CJK SC", sans-serif; }
.tabs { height: 21px; flex: none; display: flex; background: #fff; border-bottom: 1px solid #d9d9d9; }
.tab { width: 64px; border: 1px solid #d9d9d9; border-bottom-color: #fff; margin-bottom: -1px; background: #fff; }
.sheet { flex: 1; margin: 3px 1px 3px 4px; padding: 1px; border: 1px solid #a5a5ad; background: #fff; }

table { border-collapse: separate; border-spacing: 0; table-layout: fixed; }
th, td { padding: 0; font-weight: normal; border: 1px solid #bfbfbf; border-width: 0 1px 1px 0; white-space: nowrap; }
th { background: linear-gradient(#fff, #efefef); }
th.hot { background: linear-gradient(#fbd899, #f0bf62); color: #5a005a; }
.props { width: 569px; }
.c-no { width: 21px; }
.c-name { width: 191px; }
.c-val { width: 326px; }
.c-add { width: 31px; }
.props thead th { height: 23px; }
.props tbody th, .props tbody td { height: 19px; line-height: 16px; font-size: 11px; }
.props tbody td { padding-left: 1px; }
.props tbody .name { padding: 1px 0 0 19px; font-size: 12px; }
.props .key { color: #00f; }
.props .add { padding: 0; }
.props .add input { display: block; appearance: none; width: 13px; height: 13px; margin: 0 auto; border: 1px solid #333; background: #fff; }
.props tbody .group { padding-left: 2px; font-size: 12px; color: #808080; }
.group button { width: 13px; height: 13px; margin-right: 4px; border: 1px solid #aaa; color: #000; line-height: 10px; vertical-align: middle; }
.props .sel th { background: #ffd28a; color: #5a005a; }
.props .sel .name { background: #0078d7; color: #fff; }
.cur { background: #d8eaf8; }
.rebar { display: inline-block; width: 10px; height: 10px; vertical-align: -1px; margin: 0 2px; }

/* status bar */
.status { height: 21px; flex: none; display: flex; gap: 2px; font-family: "Liberation Serif", "Noto Sans CJK SC", sans-serif; }
.status span { padding-left: 1px; line-height: 20px; border: 1px solid #d5d5d5; border-bottom: 0; background: linear-gradient(#fff, #f0f0f0); white-space: nowrap; }
.s1 { width: 148px; }
.s2 { width: 78px; }
.s3 { width: 97px; }
.s4 { width: 49px; }
.s5 { flex: 1; }
.s6 { width: 71px; }

/* task bar */
.taskbar { height: 40px; flex: none; display: flex; background: #000c10; color: #fff; }
.start { width: 48px; display: flex; align-items: center; justify-content: center; background: #000; }
.start svg { width: 16px; height: 16px; }
.cortana { width: 344px; display: flex; align-items: center; gap: 5px; padding: 0 15px 0 9px; background: #333; }
.ringo { width: 22px; height: 22px; }
.cortana input { flex: 1; min-width: 0; font-size: 14px; line-height: 20px; height: 24px; }
.cortana input::placeholder { color: #a0a0a0; opacity: 1; }
.mic { width: 12px; height: 18px; }
.apps { display: flex; gap: 1px; }
.apps button { width: 48px; height: 40px; display: flex; align-items: center; justify-content: center; border-bottom: 2px solid transparent; }
.apps .gapped { margin-left: 5px; }
.apps svg { width: 24px; height: 24px; }
.apps .run { background: linear-gradient(#76b9ed, #76b9ed) center bottom / 40px 2px no-repeat; background-origin: border-box; }
.apps .active { background: #343d41; border-bottom-color: #76b9ed; }
.tray { margin-left: auto; display: flex; align-items: center; gap: 5px; padding-right: 12px; }
.kb { width: 24px; height: 14px; margin-left: 5px; }
.ime { font-size: 13px; margin: 0 5px 0 3px; }
.clock { display: flex; flex-direction: column; justify-content: center; align-items: center; width: 66px; line-height: 19px; }
.notes { width: 54px; position: relative; background: #000; border-right: 1px solid #555; margin-right: 3px; display: flex; align-items: center; justify-content: center; }
.notes svg { width: 26px; height: 26px; }
.notes b { position: absolute; left: 29px; top: 16px; font-size: 11px; }

/* floating things */
.ime-bar {
  position: absolute;
  left: 822px;
  top: 13px;
  height: 24px;
  width: 167px;
  display: flex;
  align-items: center;
  gap: 6px;
  padding-left: 15px;
  border: 1px solid #a9bfd4;
  background: #fff;
  color: #1f74c8;
  font-size: 15px;
}
.sogou { position: absolute; left: -19px; top: -4px; width: 28px; height: 28px; }
.ball {
  position: absolute;
  left: 1139px;
  top: -29px;
  width: 48px;
  height: 48px;
  border: 2px solid #ddd;
  border-radius: 50%;
  background: #43c464;
  box-shadow: inset 0 0 0 1px #1d8b49, 0 1px 4px #888;
  color: #fff;
  font-weight: bold;
  text-align: center;
  padding-top: 27px;
}

.dialog {
  position: absolute;
  left: 765px;
  top: 336px;
  width: 456px;
  height: 349px;
  display: flex;
  flex-direction: column;
  border: 1px solid #2d8ae8;
  background: #f0f0f0;
  box-shadow: 0 4px 16px rgba(0, 0, 0, .4);
  font-family: "Liberation Sans", "Noto Sans CJK SC", sans-serif;
}
.dlg-head { height: 25px; flex: none; display: flex; align-items: center; justify-content: space-between; padding: 0 9px 0 3px; background: #fff; }
.dlg-head button { display: flex; }
.dlg-head svg { width: 12px; height: 12px; }
.dlg-body { flex: 1; padding: 1px; border: 1px solid #a5a5a5; background: #fff; }
.hoops { width: 404px; }
.h-no { width: 21px; }
.h-id { width: 61px; }
.h-info { width: 121px; }
.h-fig { width: 201px; }
.hoops thead th { height: 19px; }
.hoops tbody th { background: #ffd28a; color: #5a005a; }
.hoops tbody th, .hoops tbody td { height: 34px; font-size: 11px; }
.hoops .id { background: #d8eaf8; text-align: center; }
.hoops .info { padding-left: 1px; }
.hoops .fig { vertical-align: top; padding-top: 3px; }
.shape { display: flex; justify-content: center; align-items: center; gap: 1px; }
.bar { width: 123px; height: 21px; border: 2px solid #000; border-bottom: 0; color: #e00000; text-align: center; line-height: 13px; }
.dlg-foot { height: 41px; flex: none; display: flex; align-items: center; gap: 7px; padding-left: 5px; }
.dlg-foot button { width: 73px; height: 24px; border: 1px solid #adadad; background: #e1e1e1; }
.dlg-foot .ok { margin-left: 45px; border: 2px solid #0078d7; }

.marks { position: absolute; left: 0; top: 0; width: 1366px; height: 768px; pointer-events: none; }
.marks ellipse { fill: none; stroke: #f00; stroke-width: 7px; }
```
